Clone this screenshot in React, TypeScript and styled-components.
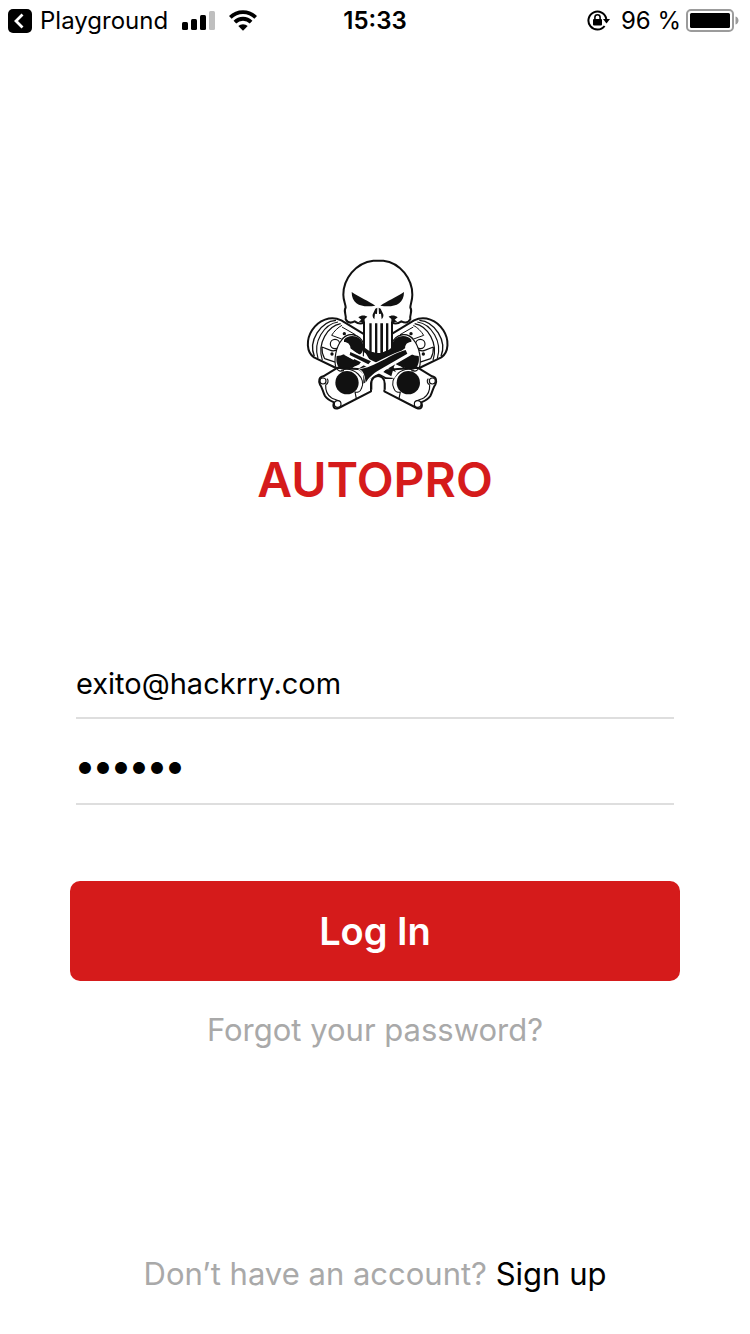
import React, { useState } from "react";
import styled, { createGlobalStyle } from "styled-components";

const RED = "#d51b1b";
const FONT = `Inter, "Liberation Sans", sans-serif`;

const GlobalStyle = createGlobalStyle`
  *, *::before, *::after { box-sizing: border-box; }
  body {
    margin: 0;
    background: #fff;
    color: #000;
    font-family: ${FONT};
  }
`;

const Screen = styled.div`
  display: flex;
  flex-direction: column;
  min-height: 100vh;
  background: #fff;
`;

const StatusBar = styled.header`
  display: grid;
  grid-template-columns: 1fr auto 1fr;
  align-items: center;
  height: 42px;
  padding: 0 8px;
  font-size: 24px;
  line-height: 42px;
`;

const StatusGroup = styled.div<{ $end?: boolean }>`
  display: flex;
  align-items: center;
  justify-content: ${(p) => (p.$end ? "flex-end" : "flex-start")};
  gap: ${(p) => (p.$end ? "5px" : "14px")};
  white-space: nowrap;

  svg {
    flex: none;
    display: block;
  }
`;

const BackButton = styled.button`
  display: flex;
  align-items: center;
  gap: 8px;
  padding: 0;
  border: 0;
  background: none;
  color: inherit;
  font: inherit;
  cursor: pointer;
`;

const Clock = styled.time`
  font-weight: 600;
`;

const Percent = styled.span`
  margin-left: 6px;
`;

const Main = styled.main`
  display: flex;
  flex: 1;
  flex-direction: column;
  align-items: center;
  padding: 213px 70px 40px;
`;

const Title = styled.h1`
  margin: 35px 0 0;
  color: ${RED};
  font-size: 48px;
  font-weight: 600;
  line-height: 60px;
`;

const Form = styled.form`
  display: flex;
  flex-direction: column;
  align-self: stretch;
  margin-top: 141px;
`;

const Field = styled.input`
  width: auto;
  height: 68px;
  margin: 0 6px 18px;
  padding: 0 0 2px;
  border: 0;
  border-bottom: 2px solid #dedede;
  border-radius: 0;
  outline: 0;
  background: transparent;
  color: #000;
  font-family: ${FONT};
  font-size: 29px;

  &[type="password"] {
    padding-bottom: 10px;
    font-size: 38px;
    font-weight: 700;
  }
`;

const LoginButton = styled.button`
  height: 100px;
  margin-top: 58px;
  border: 0;
  border-radius: 10px;
  background: ${RED};
  color: #fff;
  font-family: ${FONT};
  font-size: 38px;
  font-weight: 600;
  cursor: pointer;
`;

const Link = styled.a<{ $strong?: boolean }>`
  color: ${(p) => (p.$strong ? "#000" : "#a9a9a9")};
  font-size: 31px;
  line-height: 40px;
  text-decoration: none;
`;

const Forgot = styled.p`
  margin: 29px 0 0;
  text-align: center;
`;

const SignUp = styled.p`
  margin: auto 0 0;
  color: #a9a9a9;
  font-size: 31px;
  line-height: 40px;
  text-align: center;
`;

const BackIcon = () => (
  <svg width="24" height="24" viewBox="0 0 24 24" aria-hidden="true">
    <rect width="24" height="24" rx="5" fill="#000" />
    <path d="M14.500 5.500 8 12l6.500 6.500" fill="none" stroke="#fff" strokeWidth="2.800" />
  </svg>
);

const SignalIcon = () => (
  <svg width="33" height="22" viewBox="0 0 33 22" aria-hidden="true">
    <rect x="0" y="12" width="6" height="8" rx="1.500" />
    <rect x="9" y="9" width="6" height="11" rx="1.500" />
    <rect x="18" y="5" width="6" height="15" rx="1.500" />
    <rect x="27" y="1" width="6" height="19" rx="1.500" fill="#bfbfbf" />
  </svg>
);

const WifiIcon = () => (
  <svg width="28" height="22" viewBox="0 0 28 22" aria-hidden="true">
    <g fill="none" stroke="#000" strokeWidth="3.800">
      <path d="M1.300 7.300a18 18 0 0 1 25.400 0" />
      <path d="M5.900 12.100a11.500 11.500 0 0 1 16.200 0" />
    </g>
    <path d="M14 20.800 9.300 16.100a6.700 6.700 0 0 1 9.400 0z" />
  </svg>
);

const RotationLockIcon = () => (
  <svg width="23" height="22" viewBox="0 0 23 22" aria-hidden="true">
    <path d="M17.600 16A9 9 0 1 1 19.300 9" fill="none" stroke="#000" strokeWidth="2" />
    <path d="M16 9h7l-3.500 4.400z" />
    <rect x="6" y="9" width="9" height="6.500" rx="1" />
    <path d="M7.900 10V7.300a2.600 2.600 0 0 1 5.200 0V10" fill="none" stroke="#000" strokeWidth="1.600" />
  </svg>
);

const BatteryIcon = () => (
  <svg width="56" height="24" viewBox="0 0 56 24" aria-hidden="true">
    <rect x="1" y="1" width="46" height="21" rx="4" fill="#fff" stroke="#9b9b9b" strokeWidth="2" />
    <rect x="4" y="4" width="40" height="15" rx="1.500" />
    <path d="M49.500 7.500c4 1 4 7 0 8z" fill="#9b9b9b" />
  </svg>
);

const PistonHalf = () => (
  <g fill="none" stroke="#111" strokeWidth="3.500" strokeLinejoin="round">
    {/* piston head and rings */}
    <path
      d="M193 236 124 196C92 181 55 195 36 226C18 254 19 291 42 307L108 338L137 250Z"
      fill="#fff"
      stroke="none"
    />
    <path d="M193 238 124 196C92 181 55 195 36 226C18 254 19 291 42 307L108 339" strokeWidth="6" />
    <path d="M108 196C62 199 24 258 43 304" strokeWidth="4" />
    <path d="M114 201C72 207 38 261 54 310" />
    <path d="M122 206C84 213 50 264 67 316" />
    <path d="M126 211C115 216 101 230 95 241L125 252C137 240 154 239 166 239L126 216" strokeWidth="3" />
    <path d="M66 276C65 289 68 300 74 311M66 276 92 286C100 289 110 286 117 279M74 311 108 322" />
    <circle cx="105" cy="267" r="14" />
    <circle cx="133" cy="236" r="5" fill="#111" stroke="none" />
    <circle cx="96" cy="297" r="5" fill="#111" stroke="none" />
    {/* open skirt */}
    <path d="M126 254C142 232 179 233 191 267L190 306L151 342L108 338C101 315 107 276 126 254Z" fill="#fff" />
    <path d="M132 254C147 236 184 240 190 271C192 285 186 296 178 300L150 279C151 268 143 261 132 261Z" fill="#111" stroke="none" />
    <path d="M110 303C118 303 127 300 132 297L181 326C167 335 145 339 125 348C111 335 107 319 110 303Z" fill="#111" stroke="none" />
    {/* bearing housing */}
    <path
      d="M113 338 70 364C57 366 55 377 60 389C67 397 68 410 75 423C82 434 90 437 102 442C97 456 103 464 116 459L213 409L213 385C216 366 225 361 234 361L228 347 172 342Z"
      fill="#fff"
      strokeWidth="6"
    />
    <path d="M77 389C76 407 83 421 95 429C105 434 116 435 120 441M81 371C87 377 84 387 77 389" />
    <circle cx="69" cy="378" r="9" fill="#fff" />
    <circle cx="113" cy="447" r="10" fill="#fff" />
    <path d="M123 346C162 332 200 371 184 401C181 410 172 413 165 411L169 431" />
    <path d="M110 338C113 350 121 349 132 347" />
    <circle cx="141" cy="383" r="35" fill="#111" stroke="none" />
  </g>
);

const Logo = () => (
  <svg width="150" height="160" viewBox="0 0 450 480" role="img" aria-label="Autopro skull and pistons">
    <PistonHalf />
    <g transform="translate(466 0) scale(-1 1)">
      <PistonHalf />
    </g>
    {/* shadow between the crossed rods */}
    <path d="M190 283H278L299 301 281 337 290 357 277 372H254C247 357 221 357 214 370L190 386 190 357 174 342 211 318Z" fill="#111" />
    {/* rear rod */}
    <path d="M137 269C149 267 154 275 150 284L293 354 283 369 258 367 129 298C146 299 145 282 137 269Z" fill="#fff" />
    <path d="M151 291 213 319 205 328 149 300ZM162 312 183 322 176 328 158 320ZM258 343 280 342 274 364 250 351Z" fill="#111" />
    {/* front rod */}
    <path d="M174 342C220 333 276 290 318 284C313 273 321 264 330 269C326 282 324 297 339 297L242 353C218 362 205 375 196 392C194 367 191 351 174 342Z" fill="#fff" />
    <path d="M178 342C221 339 277 294 317 285L322 296 239 344C218 355 204 371 197 383C195 363 191 348 178 342Z" fill="#111" />
    <path d="M214 404V386C214 355 254 355 254 386V404" fill="#fff" stroke="#111" strokeWidth="6" />
    {/* skull */}
    <path
      d="M220 17H250C302 23 337 73 337 119C337 137 331 148 331 158C339 169 328 179 331 193C325 204 315 205 304 199C294 206 284 207 276 202V286L234 300 192 286V202C184 207 174 206 164 199C153 205 143 204 137 193C140 179 129 169 137 158C137 148 130 137 130 119C130 73 166 23 220 17Z"
      fill="#fff"
      stroke="#111"
      strokeWidth="6"
      strokeLinejoin="round"
    />
    <g fill="#111">
      <path d="M155 111C179 127 207 139 226 152C190 158 155 152 155 111Z" />
      <path d="M312 111C288 127 260 139 241 152C277 158 312 152 312 111Z" />
      <path d="M226 161 232 158 231 177 225 176 223 193C217 186 216 180 220 174Z" />
      <path d="M242 161 236 158 237 177 243 176 245 193C251 186 252 180 248 174Z" />
      <path d="M175 187C185 178 198 182 202 185L194 192V233L189 202 176 200 184 194Z" />
      <path d="M293 187C283 178 270 182 266 185L274 192V233L279 202 292 200 284 194Z" />
      <path d="M192 277 208 288V205H215V291L225 293V205H232V294H241V205H249V292L258 288V205H265V286L276 277V292L234 315 192 292Z" />
    </g>
  </svg>
);

export default function App() {
  const [email, setEmail] = useState("exito@hackrry.com");
  const [password, setPassword] = useState("secret");

  return (
    <>
      <GlobalStyle />
      <Screen>
        <StatusBar>
          <StatusGroup>
            <BackButton type="button">
              <BackIcon />
              Playground
            </BackButton>
            <SignalIcon />
            <WifiIcon />
          </StatusGroup>
          <Clock>15:33</Clock>
          <StatusGroup $end>
            <RotationLockIcon />
            <Percent>96 %</Percent>
            <BatteryIcon />
          </StatusGroup>
        </StatusBar>
        <Main>
          <Logo />
          <Title>AUTOPRO</Title>
          <Form onSubmit={(e) => e.preventDefault()}>
            <Field
              type="email"
              aria-label="Email"
              value={email}
              onChange={(e) => setEmail(e.target.value)}
            />
            <Field
              type="password"
              aria-label="Password"
              value={password}
              onChange={(e) => setPassword(e.target.value)}
            />
            <LoginButton type="submit">Log In</LoginButton>
          </Form>
          <Forgot>
            <Link href="#forgot">Forgot your password?</Link>
          </Forgot>
          <SignUp>
            Don’t have an account?{" "}
            <Link href="#signup" $strong>
              Sign up
            </Link>
          </SignUp>
        </Main>
      </Screen>
    </>
  );
}
